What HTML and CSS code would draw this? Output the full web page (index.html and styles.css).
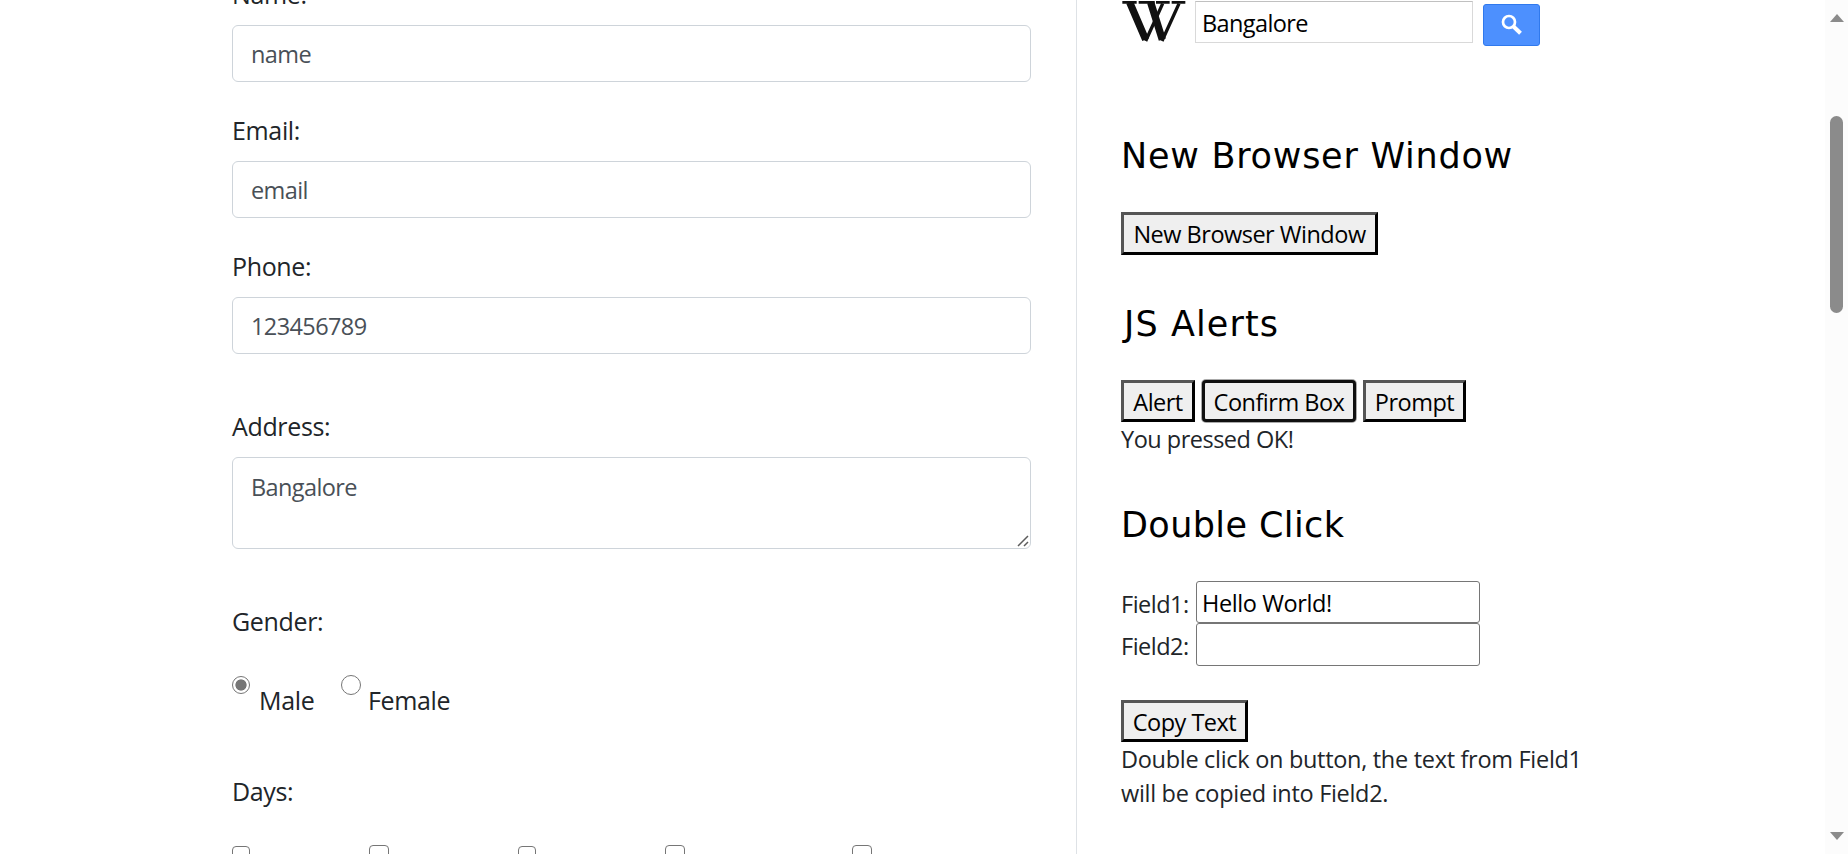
FILE: index.html
```html
<!DOCTYPE html>
<html lang="en">
<head>
<meta charset="utf-8">
<title>Automation Testing Practice</title>
<link rel="stylesheet" href="styles.css">
</head>
<body>
<div class="page">
  <main class="form">
    <label class="label">Name:</label>
    <input class="control" type="text" value="name">
    <label class="label label-next">Email:</label>
    <input class="control" type="text" value="email">
    <label class="label label-next">Phone:</label>
    <input class="control digits" type="text" value="123456789">
    <label class="label label-group">Address:</label>
    <div class="area-wrap">
      <textarea class="control area">Bangalore</textarea>
      <svg class="grip" width="12" height="12" viewBox="0 0 12 12"><path d="M1 11L11 1M7 11L11 7" stroke="#5c5c5c" stroke-width="1.5" fill="none"/></svg>
    </div>
    <label class="label label-group">Gender:</label>
    <div class="options">
      <span class="radio checked"></span><span class="label male">Male</span>
      <span class="radio large"></span><span class="label female">Female</span>
    </div>
    <label class="label label-days">Days:</label>
    <div class="days">
      <span class="box"></span><span class="box large"></span><span class="box"></span><span class="box large"></span><span class="box large"></span>
    </div>
  </main>
  <aside class="side">
    <div class="wiki">
      <svg class="logo" width="64" height="42" viewBox="0 0 192 126">
        <g fill="none" stroke="#111">
          <path d="M23 4L71 116M86 4L121 116" stroke-width="22"/>
          <path d="M71 120L122 8M120 120L171 8" stroke-width="10"/>
          <path d="M1 4H44M50 4H98M102 4H143M149 4H190" stroke-width="8"/>
        </g>
      </svg>
      <input class="wiki-input" type="text" value="Bangalore">
      <button class="search" aria-label="Search"><svg width="22" height="22" viewBox="0 0 22 22" fill="none" stroke="#fff"><circle cx="8" cy="8" r="6" stroke-width="2.7"/><path d="M12.5 12.5L19.5 19.3" stroke-width="4"/></svg></button>
    </div>
    <h2 class="title title-first">New Browser Window</h2>
    <div class="buttons"><button class="btn btn-window">New Browser Window</button></div>
    <h2 class="title title-js">JS Alerts</h2>
    <div class="buttons">
      <button class="btn btn-alert">Alert</button>
      <button class="btn btn-confirm">Confirm Box</button>
      <button class="btn btn-prompt">Prompt</button>
    </div>
    <p class="text pressed">You pressed OK!</p>
    <h2 class="title title-double">Double Click</h2>
    <div class="field"><span class="text">Field1:</span><input class="field-input" type="text" value="Hello World!"></div>
    <div class="field field-second"><span class="text">Field2:</span><input class="field-input second" type="text"></div>
    <div class="buttons copy"><button class="btn btn-copy">Copy Text</button></div>
    <p class="text note">Double click on button, the text from Field1<br>will be copied into Field2.</p>
  </aside>
  <div class="scrollbar">
    <span class="arrow up"></span><span class="thumb"></span><span class="arrow down"></span>
  </div>
</div>
</body>
</html>
```
FILE: styles.css
```css
* { box-sizing: border-box; }
body { margin: 0; background: #fff; overflow: hidden; font-family: "Open Sans", "Noto Sans", sans-serif; color: #212529; }
input, button, textarea { font: inherit; letter-spacing: inherit; margin: 0; outline: none; }
.page { display: flex; width: 1848px; height: 854px; overflow: hidden; font-size: 23.5px; letter-spacing: -0.5px; }

.form { display: flex; flex-direction: column; width: 1077px; flex: none; padding: 0 45px 0 232px; border-right: 1px solid #dee2e6; }
.form > :first-child { margin-top: -23px; }
.label { font-size: 25px; line-height: 34px; height: 34px; flex: none; margin-bottom: 14px; letter-spacing: -0.35px; }
.label-next { margin-top: 31px; }
.label-group { margin-top: 55px; }
.control { display: block; width: 100%; height: 57px; flex: none; padding: 1px 18px 0; border: 1px solid #ced4da; border-radius: 6px; background: #fff; color: #495057; letter-spacing: -0.6px; }
.area-wrap { position: relative; height: 92px; flex: none; }
.area { height: 92px; padding: 11px 18px; line-height: 36px; resize: none; overflow: hidden; }
.grip { position: absolute; right: 2px; bottom: 2px; }

.options { display: flex; align-items: flex-start; height: 41px; margin-top: 23px; flex: none; }
.radio { width: 18px; height: 18px; margin-top: 1px; border: 1.5px solid #767676; border-radius: 50%; flex: none; }
.radio.large { width: 20px; height: 20px; margin-top: 0; }
.radio.checked { background: radial-gradient(circle, #767676 5.2px, #fff 6px); }
.male, .female { margin: 8px 0 0 9px; }
.male { width: 82px; }
.female { margin-left: 7px; }
.label-days { margin-top: 58px; margin-bottom: 37px; }
.days { display: flex; align-items: flex-start; flex: none; }
.box { width: 18px; height: 18px; margin-top: 1px; border: 1.5px solid #767676; border-radius: 4px; }
.box.large { width: 20px; height: 20px; margin-top: 0; }
.box:nth-child(2) { margin-left: 119px; }
.box:nth-child(3) { margin-left: 129px; }
.box:nth-child(4) { margin-left: 129px; }
.box:nth-child(5) { margin-left: 167px; }

.side { width: 748px; flex: none; padding-left: 44px; }
.wiki { display: flex; align-items: flex-start; height: 46px; }
.logo { margin: 1px 9px 0 1px; flex: none; }
.wiki-input { width: 278px; height: 42px; margin-top: 1px; padding: 2px 7px 0 6px; border: 1px solid #d9d9d9; border-top-color: #c0c0c0; color: #000; letter-spacing: -0.6px; }
.search { display: flex; align-items: center; justify-content: center; width: 57px; height: 42px; margin: 4px 0 0 10px; padding: 0; border: 1px solid #3079ed; border-radius: 3px; background: #4d90fe; }
.title { height: 44px; margin: 0; font: 400 35px/44px "DejaVu Sans", sans-serif; color: #000; white-space: nowrap; }
.title-first { margin: 88px 0 34px; letter-spacing: 0.75px; }
.title-js { margin: 47px 0 34px; padding-left: 3px; letter-spacing: 1.1px; }
.title-double { margin: 47px 0 34px; letter-spacing: 0.4px; }
.buttons { display: flex; gap: 7px; }
.btn { height: 42px; padding: 1px 0 0; border: 3px solid; border-color: #555 #000 #000 #555; border-radius: 0; background: #efefef; color: #000; white-space: nowrap; line-height: 34px; }
.btn-window { width: 257px; height: 43px; }
.btn-alert { width: 74px; }
.btn-confirm { width: 154px; border-color: #101010; border-radius: 4px; box-shadow: 0 0 0 1px #aaa; }
.btn-prompt { width: 103px; }
.btn-copy { width: 127px; }
.text { margin: 0; line-height: 34px; white-space: nowrap; }
.note { letter-spacing: -0.3px; }
.field { display: flex; height: 42px; align-items: center; }
.field-second { height: 43px; }
.field .text { width: 75px; padding-top: 3px; }
.field-input { width: 284px; height: 42px; padding: 1px 5px 0; border: 1px solid #767676; border-radius: 3px; background: #fff; color: #000; letter-spacing: -0.4px; }
.second { height: 43px; }
.copy { margin-top: 34px; }

.scrollbar { display: flex; flex-direction: column; align-items: center; width: 23px; flex: none; background: #fcfcfc; }
.arrow { border: 7.5px solid transparent; border-top-width: 0; border-bottom-width: 0; }
.up { margin-top: 14px; border-bottom: 8px solid #8b8b8b; }
.thumb { width: 13px; height: 197px; margin-top: 94px; border-radius: 7px; background: #8b8b8b; }
.down { margin-top: 519px; border-top: 8px solid #8b8b8b; }
```
